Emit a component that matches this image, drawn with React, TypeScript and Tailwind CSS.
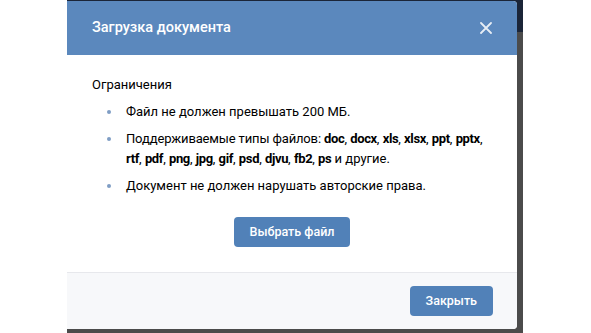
import React from 'react';

const fileTypes = ['doc', 'docx', 'xls', 'xlsx', 'ppt', 'pptx', 'rtf', 'pdf', 'png', 'jpg', 'gif', 'psd', 'djvu', 'fb2', 'ps'];

const Bullet: React.FC<{ children: React.ReactNode }> = ({ children }) => (
  <li className="relative pl-[34px]">
    <span className="absolute left-[15px] top-[8px] h-[4px] w-[4px] rounded-full bg-[#7f9dc4]" />
    {children}
  </li>
);

const App: React.FC = () => {
  return (
    <div className="flex h-[333px] w-[591px] overflow-hidden bg-white font-['Roboto',sans-serif]">
      <div className="w-[67px] shrink-0" />
      <div className="flex h-full w-[456px] shrink-0 flex-col bg-[linear-gradient(to_bottom,#1b2538_32px,#4b4b4b_32px)] pt-px pr-[6px]">
        {/* модальное окно */}
        <div className="flex w-[450px] flex-col overflow-hidden rounded-r-[4px] bg-white">
          <div className="flex h-[54px] items-center justify-between bg-[#5b88bd] pl-[25px] pr-[25px]">
            <span className="text-[14.5px] font-medium text-white">Загрузка документа</span>
            <svg width="12" height="12" viewBox="0 0 12 12" className="opacity-85">
              <path d="M1 1L11 11M11 1L1 11" stroke="#fff" strokeWidth="1.8" strokeLinecap="round" />
            </svg>
          </div>

          <div className="flex flex-col px-[25px] pt-[20px] pb-[25px] text-[13px] leading-[20px] text-black">
            <div className="mb-[7px]">Ограничения</div>
            <ul className="flex flex-col gap-[7px]">
              <Bullet>Файл не должен превышать 200 МБ.</Bullet>
              <Bullet>
                <span className="tracking-[-0.15px]">Поддерживаемые типы файлов: </span>
                {fileTypes.map((t, i) => (
                  <React.Fragment key={t}>
                    <b className="font-bold tracking-[-0.35px]">{t}</b>
                    {i < fileTypes.length - 1 ? ', ' : ' '}
                  </React.Fragment>
                ))}
                и другие.
              </Bullet>
              <Bullet>Документ не должен нарушать авторские права.</Bullet>
            </ul>
            <div className="mt-[21px] flex justify-center">
              <button className="h-[30px] rounded-[4px] bg-[#5181b8] px-[16px] text-[12.5px] font-medium text-white">
                Выбрать файл
              </button>
            </div>
          </div>

          <div className="flex h-[57px] items-center justify-end border-t border-[#e7e8ec] bg-[#f7f8fa] pr-[24px]">
            <button className="h-[30px] rounded-[4px] bg-[#5181b8] px-[16px] text-[12.5px] font-medium text-white">
              Закрыть
            </button>
          </div>
        </div>
      </div>
    </div>
  );
};

export default App;
